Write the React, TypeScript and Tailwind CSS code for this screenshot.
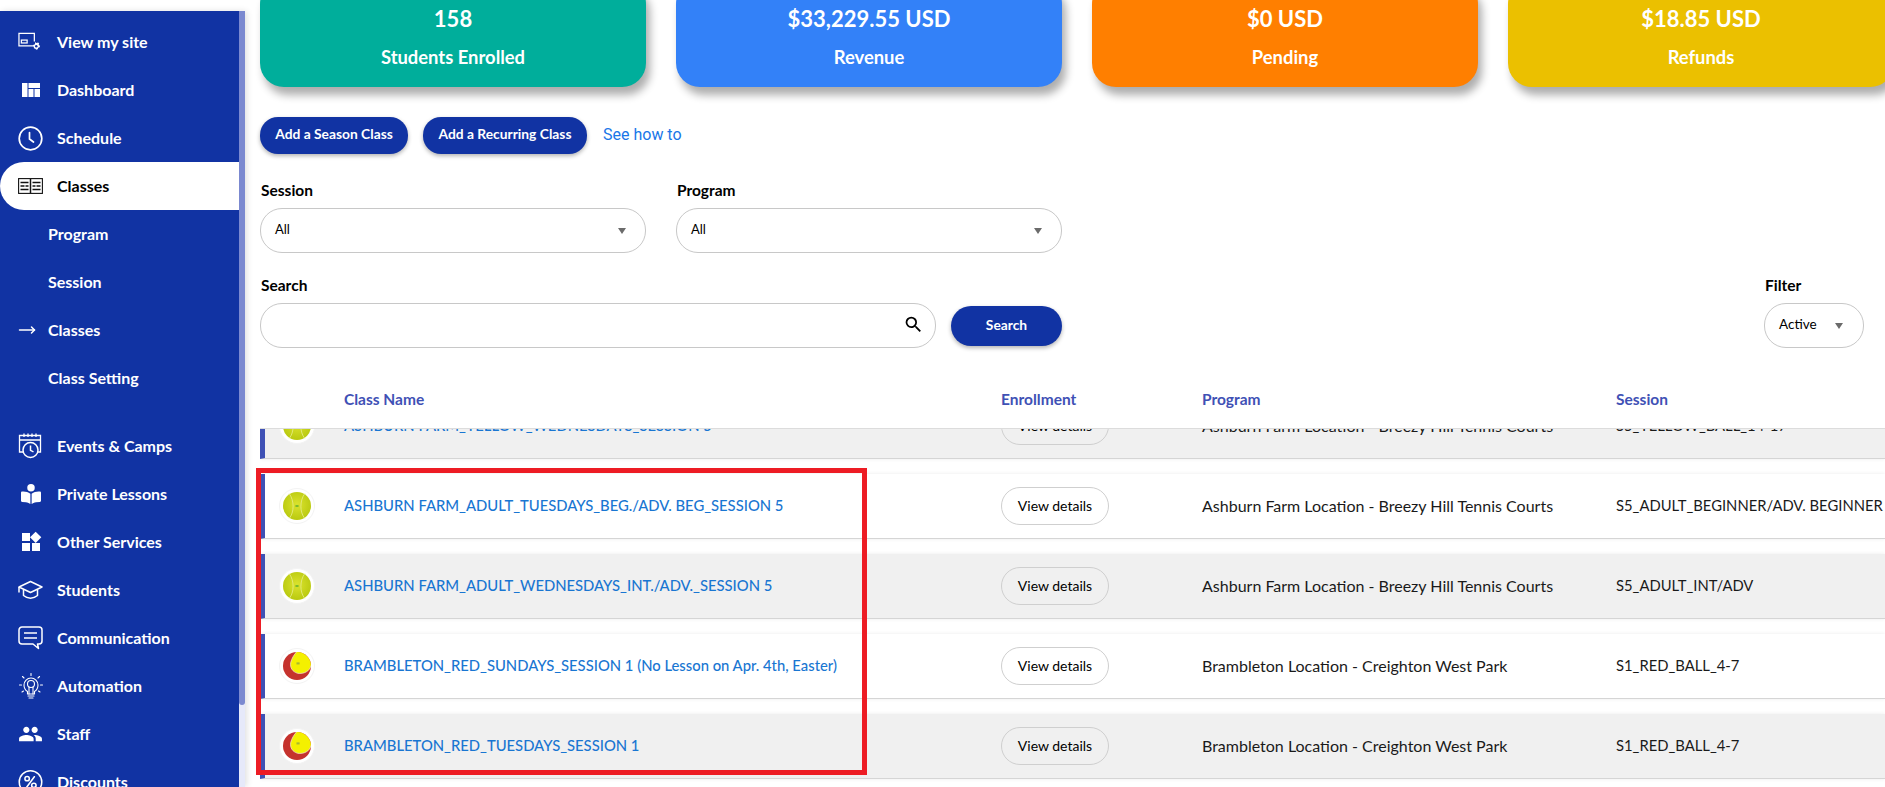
import type { ReactNode } from "react";
import { MoveRight } from "lucide-react";
import { MdWidgets, MdPeople, MdSearch } from "react-icons/md";
import { FaBookOpenReader } from "react-icons/fa6";

const font = "font-['Lato','Open_Sans',sans-serif]";

function SiteIcon() {
  return (
    <svg width="26" height="20" viewBox="0 0 26 20" fill="none" stroke="currentColor" strokeWidth="1.300">
      <path d="M17 14H1V1h16v8.500" />
      <rect x="3.500" y="8" width="6" height="3" />
      <path d="M18 10l1 1 2-.5 1 1-.5 1.500 1.500 1-.5 1.500-1.500.5-.5 1.500-1.500.5-1-1-1.500-.5v-1.500l-1-1 1-1.500h1z" fill="currentColor" stroke="none" />
      <circle cx="19" cy="14.500" r="1.300" fill="#1133a3" stroke="none" />
    </svg>
  );
}

function DashIcon() {
  return (
    <svg width="18" height="14" viewBox="0 0 18 14" fill="currentColor">
      <rect x="0" y="0" width="5.500" height="14" />
      <rect x="6.500" y="0" width="11.500" height="5" />
      <rect x="6.500" y="6" width="5" height="8" />
      <rect x="12.500" y="6" width="5.500" height="8" />
    </svg>
  );
}

function ClockIcon() {
  return (
    <svg width="25" height="25" viewBox="0 0 25 25" fill="none" stroke="currentColor" strokeWidth="1.700" strokeLinecap="round">
      <circle cx="12.500" cy="12.500" r="11.300" />
      <path d="M11.500 6.500v6.500l4 3" />
    </svg>
  );
}

function BookIcon() {
  return (
    <svg width="25" height="16" viewBox="0 0 25 16" fill="none" stroke="#111" strokeWidth="1.100">
      <rect x="0.600" y="0.600" width="23.800" height="14.800" />
      <path d="M12.500 1v14" strokeWidth="1.500" />
      <path d="M2.500 4.500h8M2.500 8h4M7.500 8h3M2.500 11.500h8M14.500 4.500h8M14.500 8h3M18.500 8h4M14.500 11.500h8" strokeWidth="1.300" />
    </svg>
  );
}

function CalendarIcon() {
  return (
    <svg width="25" height="26" viewBox="0 0 25 26" fill="none" stroke="currentColor" strokeWidth="1.300">
      <path d="M7 19H1.500V2.500h21V19h-4" />
      <path d="M1.500 7h21M6 .5v3.500M10 .5v3.500M14 .5v3.500M18 .5v3.500" />
      <circle cx="12.500" cy="17" r="7.500" fill="#1133a3" strokeWidth="1.500" />
      <path d="M12.500 12.500v4.800l3 1.500" strokeWidth="1.500" />
    </svg>
  );
}

function CapIcon() {
  return (
    <svg width="25" height="20" viewBox="0 0 25 20" fill="none" stroke="currentColor" strokeWidth="1.500" strokeLinejoin="round">
      <path d="M12.500 1.500L24 7l-11.500 5.500L1 7z" />
      <path d="M5.500 9.500v6c4 3.500 10 3.500 14 0v-6" />
      <path d="M1 7v5.500" />
    </svg>
  );
}

function ChatIcon() {
  return (
    <svg width="25" height="24" viewBox="0 0 25 24" fill="none" stroke="currentColor" strokeWidth="1.500" strokeLinejoin="round">
      <path d="M4 1h17a3 3 0 0 1 3 3v11a3 3 0 0 1-3 3h-1.500l1 4.500-5.500-4.500H4a3 3 0 0 1-3-3V4a3 3 0 0 1 3-3z" />
      <path d="M6 7h13M6 12h13" />
    </svg>
  );
}

function BulbIcon() {
  return (
    <svg width="24" height="26" viewBox="0 0 24 26" fill="none" stroke="currentColor" strokeWidth="1.100" strokeLinecap="round">
      <path d="M12 .5v2M3.500 3.500l1.500 1.500M20.500 3.500L19 5M.5 12h2M21.500 12h2M3 19l1.500-1M21 19l-1.500-1" />
      <path d="M8.500 21v-2.500C6 17 5 15 5 12a7 7 0 0 1 14 0c0 3-1 5-3.500 6.500V21z" />
      <circle cx="12" cy="11" r="3.500" />
      <path d="M10 14v7M14 14v7M9 23h6M10 25h4" />
    </svg>
  );
}

function DiscountIcon() {
  return (
    <svg width="26" height="26" viewBox="0 0 26 26" fill="none" stroke="currentColor" strokeWidth="1.600" strokeLinecap="round">
      <circle cx="13" cy="13" r="11.700" />
      <circle cx="9.500" cy="9.500" r="2.300" />
      <circle cx="16.500" cy="16.500" r="2.300" />
      <path d="M17 7.500l-8 11" />
    </svg>
  );
}

function TennisBall({ red }: { red?: boolean }) {
  if (red) {
    return (
      <svg width="28" height="28" viewBox="0 0 27 27">
        <circle cx="13.500" cy="13.500" r="13.500" fill="#c5322d" />
        <path d="M13 0A13.500 13.500 0 0 1 27 13C26 18.500 20 21.500 14 20.500 9 19 6.500 15 7.500 10 8.500 6 10.500 3 13 0z" fill="#f4f000" />
        <path d="M13 0C10.500 3 8.500 6 7.500 10 6.500 15 9 19 14 20.500 20 21.500 26 18.500 27 13" fill="none" stroke="#efe6d6" strokeWidth=".7" />
        <rect x="13" y="10" width="3" height="2" fill="#a8b830" />
      </svg>
    );
  }
  return (
    <svg width="28" height="28" viewBox="0 0 27 27">
      <defs>
        <radialGradient id="ball" cx="50%" cy="45%" r="62%">
          <stop offset="0%" stopColor="#dbe32e" />
          <stop offset="100%" stopColor="#b5c60c" />
        </radialGradient>
      </defs>
      <circle cx="13.500" cy="13.500" r="13.500" fill="url(#ball)" />
      <path d="M6 1.500c5 7 5 18 0 24M21 1.500c-5 7-5 18 0 24" stroke="#e6ec8c" strokeWidth=".8" fill="none" />
      <rect x="12" y="12.500" width="3" height="2" fill="#7cba2c" />
    </svg>
  );
}

function Caret() {
  return <span className="w-0 h-0 border-x-[4.500px] border-x-transparent border-t-[6px] border-t-[#6b6b6b]"></span>;
}

const navItems: { label: string; icon?: ReactNode; sub?: boolean; active?: boolean; gap?: boolean }[] = [
  { label: "View my site", icon: <SiteIcon /> },
  { label: "Dashboard", icon: <DashIcon /> },
  { label: "Schedule", icon: <ClockIcon /> },
  { label: "Classes", icon: <BookIcon />, active: true },
  { label: "Program", sub: true },
  { label: "Session", sub: true },
  { label: "Classes", sub: true, icon: <MoveRight size={18} /> },
  { label: "Class Setting", sub: true },
  { label: "Events & Camps", icon: <CalendarIcon />, gap: true },
  { label: "Private Lessons", icon: <FaBookOpenReader size={20} /> },
  { label: "Other Services", icon: <MdWidgets size={24} /> },
  { label: "Students", icon: <CapIcon /> },
  { label: "Communication", icon: <ChatIcon /> },
  { label: "Automation", icon: <BulbIcon /> },
  { label: "Staff", icon: <MdPeople size={26} /> },
  { label: "Discounts", icon: <DiscountIcon /> },
];

const stats = [
  { value: "158", label: "Students Enrolled", color: "bg-[#00ae9b]" },
  { value: "$33,229.55 USD", label: "Revenue", color: "bg-[#3381f8]" },
  { value: "$0 USD", label: "Pending", color: "bg-[#ff7f00]" },
  { value: "$18.85 USD", label: "Refunds", color: "bg-[#ebc000]" },
];

const rows = [
  { name: "ASHBURN FARM_YELLOW_WEDNESDAYS_SESSION 5", program: "Ashburn Farm Location - Breezy Hill Tennis Courts", session: "S5_YELLOW_BALL_14-17" },
  { name: "ASHBURN FARM_ADULT_TUESDAYS_BEG./ADV. BEG_SESSION 5", program: "Ashburn Farm Location - Breezy Hill Tennis Courts", session: "S5_ADULT_BEGINNER/ADV. BEGINNER" },
  { name: "ASHBURN FARM_ADULT_WEDNESDAYS_INT./ADV._SESSION 5", program: "Ashburn Farm Location - Breezy Hill Tennis Courts", session: "S5_ADULT_INT/ADV" },
  { name: "BRAMBLETON_RED_SUNDAYS_SESSION 1 (No Lesson on Apr. 4th, Easter)", program: "Brambleton Location - Creighton West Park", session: "S1_RED_BALL_4-7", red: true },
  { name: "BRAMBLETON_RED_TUESDAYS_SESSION 1", program: "Brambleton Location - Creighton West Park", session: "S1_RED_BALL_4-7", red: true },
];

function Sidebar() {
  return (
    <aside className="w-[245px] shrink-0 pt-[11px] h-full">
      <div className="relative h-full bg-[#1133a3] overflow-hidden pt-[7px] pr-[6px] shadow-[2px_0_6px_rgba(0,0,0,0.12)]">
        {navItems.map((item, i) => (
          <div
            key={i}
            className={`h-12 flex items-center text-[16px] font-bold ${item.gap ? "mt-5" : ""} ${
              item.active ? "bg-white text-black rounded-l-[24px]" : "text-white"
            }`}
          >
            {item.sub ? (
              <>
                <span className="w-[48px] pl-[18px] shrink-0 flex items-center">{item.icon}</span>
                <span>{item.label}</span>
              </>
            ) : (
              <>
                <span className="w-[57px] pl-[18px] pr-[14px] shrink-0 flex items-center justify-center">{item.icon}</span>
                <span>{item.label}</span>
              </>
            )}
          </div>
        ))}
        {/* scrollbar */}
        <div className="absolute top-0 right-0 bottom-0 w-[6px] bg-[#e6e9fa]">
          <div className="h-[694px] bg-[#7b89d0] rounded-b-[3px]"></div>
        </div>
      </div>
    </aside>
  );
}

function SelectBox({ value }: { value: string }) {
  return (
    <div className="w-[386px] h-[45px] border border-[#c8c8c8] rounded-[22px] flex items-center justify-between pl-[14px] pr-[19px] text-[13px] text-black">
      <span className="-mt-[2px]">{value}</span>
      <Caret />
    </div>
  );
}

export default function App() {
  return (
    <div className={`relative flex w-full h-[787px] overflow-hidden bg-white ${font}`}>
      <Sidebar />

      <main className="flex-1 min-w-0 pl-[15px]">
        {/* Stat cards */}
        <div className="flex gap-[30px] -mt-[20px]">
          {stats.map((s) => (
            <div
              key={s.label}
              className={`${s.color} w-[386px] h-[107px] shrink-0 rounded-[24px] text-white flex flex-col items-center justify-end pb-[18px] shadow-[4px_8px_9px_rgba(0,0,0,0.32)]`}
            >
              <div className="text-[22px] font-bold leading-[30px] mb-[11px]">{s.value}</div>
              <div className="text-[18.400px] font-bold leading-6">{s.label}</div>
            </div>
          ))}
        </div>

        {/* Add buttons */}
        <div className="flex items-center mt-[30px] h-[37px]">
          <button className="w-[148px] h-full rounded-[18px] bg-[#1133a3] text-white text-[13.800px] font-bold shadow-[0_2px_4px_rgba(0,0,0,0.3)]">
            <span className="relative -top-px">Add a Season Class</span>
          </button>
          <button className="w-[164px] h-full ml-[15px] rounded-[18px] bg-[#1133a3] text-white text-[13.800px] font-bold shadow-[0_2px_4px_rgba(0,0,0,0.3)]">
            <span className="relative -top-px">Add a Recurring Class</span>
          </button>
          <a className="ml-[16px] text-[16px] text-[#1976e8] font-['Roboto',sans-serif] -mt-[1px]">See how to</a>
        </div>

        {/* Filters */}
        <div className="flex gap-[30px] mt-[26px]">
          <div>
            <div className="h-[22px] mb-[6px] pl-px text-[15.500px] font-bold text-black leading-[20px]">Session</div>
            <SelectBox value="All" />
          </div>
          <div>
            <div className="h-[22px] mb-[6px] pl-px text-[15.500px] font-bold text-black leading-[20px]">Program</div>
            <SelectBox value="All" />
          </div>
        </div>

        <div className="flex justify-between mt-[22px] pr-[21px]">
          <div>
            <div className="h-[22px] mb-[6px] pl-px text-[15.500px] font-bold text-black leading-[20px]">Search</div>
            <div className="flex items-center gap-[15px]">
              <div className="w-[676px] h-[45px] border border-[#c8c8c8] rounded-[22px] flex items-center justify-end pr-[11px]">
                <MdSearch size={21} className="text-black -mt-[3px]" />
              </div>
              <button className="w-[111px] h-[40px] rounded-[20px] bg-[#1133a3] text-white text-[13.800px] font-bold shadow-[0_2px_4px_rgba(0,0,0,0.3)]">
                Search
              </button>
            </div>
          </div>
          <div className="w-[100px]">
            <div className="h-[22px] mb-[6px] pl-px text-[15.500px] font-bold text-black leading-[20px]">Filter</div>
            <div className="h-[45px] border border-[#c8c8c8] rounded-[22px] flex items-center justify-between pl-[14px] pr-[20px] text-[13.500px] text-black">
              <span className="-mt-[2px]">Active</span>
              <Caret />
            </div>
          </div>
        </div>

        {/* Table head */}
        <div className="grid grid-cols-[84px_657px_201px_414px_1fr] mt-[39px] pb-[17px] border-b border-[#dcdcdc] text-[15.500px] font-bold text-[#3f51b5] leading-6">
          <div></div>
          <div>Class Name</div>
          <div>Enrollment</div>
          <div>Program</div>
          <div>Session</div>
        </div>

        {/* Table body, scrolled */}
        <div className="h-[358px] overflow-hidden">
          <div className="-mt-[35px]">
            {rows.map((row, i) => (
              <div
                key={row.name}
                className={`grid grid-cols-[79px_657px_201px_414px_1fr] items-center h-[65px] mb-[15px] border-l-[5px] border-l-[#3f51b5] border-b border-b-[#d5d5d5] shadow-[0_0_4px_rgba(0,0,0,0.08)] ${
                  i % 2 === 0 ? "bg-[#f0f0f0]" : "bg-white"
                }`}
              >
                <div className="pl-[14px]">
                  <div className="w-[36px] h-[36px] rounded-full bg-white border border-[#f3f3f3] flex items-center justify-center">
                    <TennisBall red={row.red} />
                  </div>
                </div>
                <a className="-mt-px text-[14.800px] font-medium text-[#1976d2] whitespace-nowrap">{row.name}</a>
                <div>
                  <button className="w-[108px] h-[38px] border border-[#cfcfcf] rounded-[19px] text-[14px] text-black">
                    <span className="relative -top-px">View details</span>
                  </button>
                </div>
                <div className="-mt-px text-[16px] text-[#1a1a1a] whitespace-nowrap">{row.program}</div>
                <div className="-mt-px text-[14.800px] text-[#1a1a1a] whitespace-nowrap">{row.session}</div>
              </div>
            ))}
          </div>
        </div>
      </main>

      {/* annotation drawn on the screenshot */}
      <div className="absolute left-[256px] top-[468px] w-[611px] h-[307px] border-[5px] border-[#ed1c24] pointer-events-none"></div>
    </div>
  );
}
